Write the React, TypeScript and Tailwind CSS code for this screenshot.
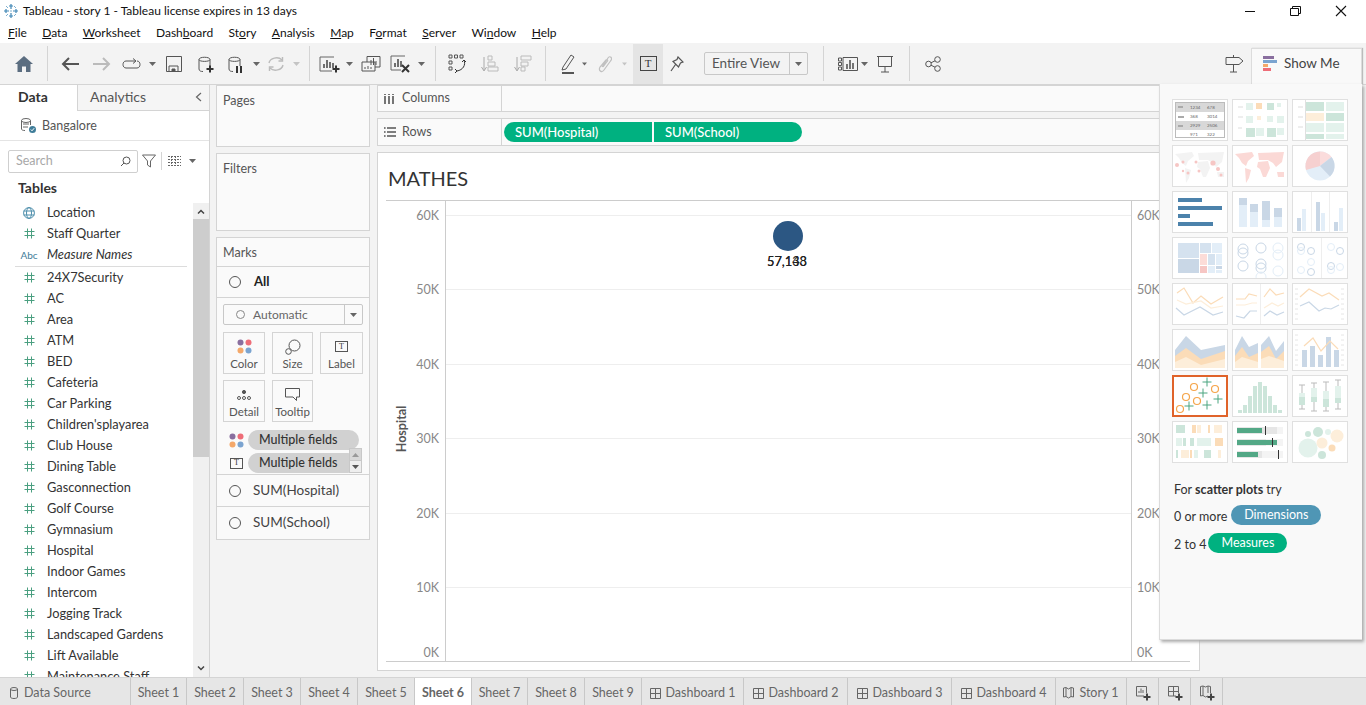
import React from 'react';

const fields = ['24X7Security', 'AC', 'Area', 'ATM', 'BED', 'Cafeteria', 'Car Parking', "Children'splayarea", 'Club House', 'Dining Table', 'Gasconnection', 'Golf Course', 'Gymnasium', 'Hospital', 'Indoor Games', 'Intercom', 'Jogging Track', 'Landscaped Gardens', 'Lift Available', 'Maintenance Staff'];
const menus = [['F', 'ile'], ['D', 'ata'], ['W', 'orksheet'], ['Dash', 'b', 'oard'], ['St', 'o', 'ry'], ['A', 'nalysis'], ['M', 'ap'], ['F', 'o', 'rmat'], ['S', 'erver'], ['Wi', 'n', 'dow'], ['H', 'elp']];
const ticks = ['60K', '50K', '40K', '30K', '20K', '10K', '0K'];

const BLUE1 = '#c9d7e6';
const BLUE2 = '#e3eef8';
const ORANGE1 = '#fbdcb8';
const ORANGE2 = '#fdeeda';
const GREEN1 = '#cce5da';
const GREEN2 = '#e3f2ec';

function Caret({ light }: { light?: boolean }) {
    return (
        <svg width="7" height="4" viewBox="0 0 7 4">
            <path d="M0 0H7L3.5 4Z" fill={light ? '#c4c4c4' : '#666'} />
        </svg>
    );
}

function Ico({ children, w = 24, h = 24 }: { children: React.ReactNode; w?: number; h?: number }) {
    return (
        <svg width={w} height={h} viewBox={`0 0 ${w} ${h}`} fill="none" stroke="#555" strokeWidth="1">
            {children}
        </svg>
    );
}

function Plus({ x, y, c = '#333' }: { x: number; y: number; c?: string }) {
    return <path d={`M${x - 3.5} ${y}H${x + 3.5}M${x} ${y - 3.5}V${y + 3.5}`} stroke={c} strokeWidth="2" />;
}

function Cylinder() {
    return <path d="M4 6.5C4 3.5 15 3.5 15 6.5V13M4 6.5C4 9 15 9 15 6.5M4 6.5V16C4 18 6 18.5 8 18.5" />;
}

function Toolbar() {
    const box = 'flex h-[40px] items-center justify-center shrink-0';
    const sep = 'h-[35px] w-px bg-[#d4d4d4] shrink-0';
    return (
        <div className="flex h-[42px] items-center border-b border-[#d4d4d4] bg-[#f3f3f3]">
            <div className={`${box} w-[47px]`}>
                <svg width="18" height="16" viewBox="0 0 18 16"><path d="M9 0L18 8H15.5V16H11V10.5H7V16H2.5V8H0Z" fill="#5b6d80" /></svg>
            </div>
            <div className={sep} />
            <div className={`${box} ml-[6px] w-[32px]`}>
                <svg width="18" height="14" viewBox="0 0 18 14" fill="none" stroke="#555" strokeWidth="2"><path d="M18 7H2M8 1L2 7L8 13" /></svg>
            </div>
            <div className={`${box} w-[32px]`}>
                <svg width="18" height="14" viewBox="0 0 18 14" fill="none" stroke="#bbb" strokeWidth="2"><path d="M0 7H16M10 1L16 7L10 13" /></svg>
            </div>
            <div className={`${box} w-[28px]`}>
                <svg width="20" height="12" viewBox="0 0 20 12" fill="none" stroke="#555"><path d="M13 3H4C0 3 0 10 4 10H15C19 10 19 3 15 3" /><path d="M11 0.5L14 3L11 5.5" /></svg>
            </div>
            <div className={`${box} w-[12px]`}><Caret /></div>
            <div className={`${box} w-[32px]`}>
                <Ico w={16} h={16}><path d="M0.5 0.5H15.5V15.5H0.5Z" /><path d="M3 15V10H12V15" /><path d="M6 13H9V15H6Z" fill="#555" /></Ico>
            </div>
            <div className={`${box} w-[30px]`}><Ico w={20} h={22}><Cylinder /><Plus x={15} y={16} /></Ico></div>
            <div className={`${box} w-[30px]`}><Ico w={20} h={22}><Cylinder /><path d="M12 13V20M16 13V20" stroke="#333" strokeWidth="2" /></Ico></div>
            <div className={`${box} w-[12px]`}><Caret /></div>
            <div className={`${box} w-[28px]`}>
                <svg width="18" height="16" viewBox="0 0 18 16" fill="none" stroke="#bbb" strokeWidth="1.4"><path d="M2 7C3 2 11 0 15 4M16 9C15 14 7 16 3 12" /><path d="M15.5 1V5H11.5M2.5 15V11H6.5" /></svg>
            </div>
            <div className={`${box} w-[12px]`}><Caret light /></div>
            <div className="w-[7px]" />
            <div className={sep} />
            <div className={`${box} ml-[8px] w-[24px]`}>
                <Ico w={24} h={20}><path d="M16 3H2V17H14" stroke="#666" /><path d="M6 14V10M9 14V6M12 14V8M15 14V9" stroke="#444" strokeWidth="1.5" /><Plus x={18} y={15} /></Ico>
            </div>
            <div className={`${box} w-[15px]`}><Caret /></div>
            <div className={`${box} w-[28px]`}>
                <Ico w={20} h={18}><path d="M6 1.5H19V12H6Z" fill="#f3f3f3" /><path d="M1 7H14V16H1Z" fill="#f3f3f3" /><path d="M10 10V5M12.5 10V3M15 10V6M4 14V12M7 14V11M10 14V12" /></Ico>
            </div>
            <div className={`${box} w-[31px]`}>
                <Ico w={24} h={20}><path d="M16 2H2V16H12" stroke="#666" /><path d="M6 13V9M9 13V5M12 13V7" stroke="#444" strokeWidth="1.5" /><path d="M13 11L20 18M20 11L13 18" stroke="#333" strokeWidth="2" /></Ico>
            </div>
            <div className={`${box} w-[11px]`}><Caret /></div>
            <div className="w-[8px]" />
            <div className={sep} />
            <div className={`${box} ml-[6px] w-[32px]`}>
                <Ico w={20} h={20}><path d="M1 1H4V4H1ZM6.5 1H9.5V4H6.5ZM12 1H15V4H12ZM1 7H4V10H1ZM1 13H4V16H1Z" /><path d="M16 6C18 11 15 16 9 17M7 15L9 17L7 19M14 8L16 6L18 8" stroke="#333" /></Ico>
            </div>
            <div className={`${box} w-[32px]`}>
                <Ico w={20} h={18}><path d="M4 2V15M1.5 12L4 16L6.5 12" stroke="#aaa" /><path d="M8 1H12V5H8ZM8 7H15V11H8ZM8 12H18V16H8Z" stroke="#bbb" /></Ico>
            </div>
            <div className={`${box} w-[33px]`}>
                <Ico w={20} h={18}><path d="M4 2V15M1.5 12L4 16L6.5 12" stroke="#aaa" /><path d="M8 1H18V5H8ZM8 7H15V11H8ZM8 12H12V16H8Z" stroke="#bbb" /></Ico>
            </div>
            <div className="w-[6px]" />
            <div className={sep} />
            <div className={`${box} ml-[8px] w-[28px]`}>
                <Ico w={16} h={20}><path d="M3 13L11 1L14 3L6 15L2 16Z" stroke="#555" /><path d="M2 19H14" stroke="#555" strokeWidth="2" /></Ico>
            </div>
            <div className={`${box} w-[5px]`}><Caret /></div>
            <div className={`${box} ml-[4px] w-[28px]`}>
                <svg width="14" height="18" viewBox="0 0 14 18" fill="none" stroke="#c0c0c0" strokeWidth="1.2"><path d="M4 12L10 3C12 0 15 3 12.5 6L6 15C4 18 0 16 2 12L8 5C9 4 10 5 9.5 6L5 12" /></svg>
            </div>
            <div className={`${box} ml-[3px] w-[5px]`}><Caret light /></div>
            <div className={`${box} ml-[6px] w-[30px] bg-[#e4e4e4]`}>
                <div className="flex h-[15px] w-[17px] items-center justify-center border border-[#444] text-[11px] leading-none text-[#333] [font-family:'Liberation_Serif',serif]">T</div>
            </div>
            <div className={`${box} w-[28px]`}>
                <Ico w={14} h={16}><path d="M8 1L13 6L10.5 7L8.5 11L3 5.5L7 3.5ZM5.5 8.5L1 15" stroke="#555" strokeWidth="1.2" /></Ico>
            </div>
            <div className="ml-[13px] flex h-[23px] w-[104px] items-center rounded-[2px] border border-[#c8c8c8]">
                <span className="flex-1 pl-[7px] text-[13.5px] text-[#555]">Entire View</span>
                <span className="flex h-full w-[18px] items-center justify-center border-l border-[#c8c8c8]"><Caret /></span>
            </div>
            <div className="w-[15px]" />
            <div className={sep} />
            <div className={`${box} ml-[11px] w-[26px]`}>
                <Ico w={20} h={14}><path d="M0.5 1H3.5V4H0.5ZM0.5 5.5H3.5V8.5H0.5ZM0.5 10H3.5V13H0.5Z" /><path d="M5 0.5H19.5V13.5H5Z" stroke="#555" /><path d="M9 12V7M12 12V3M15 12V6" strokeWidth="1.6" /></Ico>
            </div>
            <div className={`${box} w-[7px]`}><Caret /></div>
            <div className={`${box} ml-[2px] w-[30px]`}>
                <Ico w={18} h={18}><path d="M1 1.5H17M2.5 1.5V11.5H15.5V1.5M9 11.5V17M5 17H13" /></Ico>
            </div>
            <div className="w-[9px]" />
            <div className={sep} />
            <div className={`${box} ml-[8px] w-[30px]`}>
                <Ico w={16} h={16}><circle cx="3.5" cy="8" r="2.8" /><circle cx="12.5" cy="3.5" r="2.8" /><circle cx="12.5" cy="12.5" r="2.8" /><path d="M6 6.8L10 4.8M6 9.2L10 11.2" /></Ico>
            </div>
            <div className="flex-1" />
            <div className={`${box} mr-[122px] w-[20px]`}>
                <Ico w={19} h={18}><path d="M1 2.5H14L18 6L14 9.5H1ZM8.5 0V2.5M8.5 9.5V17M5 17H12" /></Ico>
            </div>
        </div>
    );
}

function Field({ name, italic, kind }: { name: string; italic?: boolean; kind: 'hash' | 'globe' | 'abc' }) {
    return (
        <div className="flex h-[21px] items-center">
            <div className="flex w-[47px] justify-center pl-[11px]">
                {kind === 'hash' && (
                    <svg width="11" height="11" viewBox="0 0 11 11" fill="none" stroke="#4a9f80"><path d="M3.5 0.5V10.5M7.5 0.5V10.5M0.5 3.5H10.5M0.5 7.5H10.5" /></svg>
                )}
                {kind === 'globe' && (
                    <svg width="12" height="12" viewBox="0 0 12 12" fill="none" stroke="#4f8fac"><circle cx="6" cy="6" r="5.4" /><ellipse cx="6" cy="6" rx="2.5" ry="5.4" /><path d="M0.6 4H11.4M0.6 8H11.4" /></svg>
                )}
                {kind === 'abc' && <span className="text-[10px] leading-none text-[#3f7d99]">Abc</span>}
            </div>
            <span className={`text-[12.8px] text-[#333] ${italic ? 'italic' : ''}`}>{name}</span>
        </div>
    );
}

function Sidebar() {
    return (
        <div className="flex h-full w-[210px] shrink-0 flex-col overflow-hidden border-r border-[#d4d4d4] bg-white">
            <div className="flex h-[26px] shrink-0">
                <div className="flex w-[77px] items-center pb-[3px] pl-[18px] text-[14px] font-bold text-[#333]">Data</div>
                <div className="flex flex-1 items-center justify-between border-b border-l border-[#d4d4d4] bg-[#f5f5f5] pb-[2px] pl-[12px] pr-[7px] text-[14px] text-[#555]">
                    <span>Analytics</span>
                    <svg width="7" height="10" viewBox="0 0 7 10" fill="none" stroke="#666" strokeWidth="1.2"><path d="M6 1L1.5 5L6 9" /></svg>
                </div>
            </div>
            <div className="flex h-[30px] shrink-0 items-center gap-[5px] border-b border-[#e4e4e4] pl-[20px] text-[12.5px] text-[#555]">
                <svg width="17" height="17" viewBox="0 0 17 17" fill="none" stroke="#666"><ellipse cx="6" cy="3.5" rx="4.5" ry="2" /><path d="M1.5 3.5V12C1.5 13 3 13.5 5 13.5M10.5 3.5V8M3 7H9M3 10H8" /><circle cx="12.5" cy="12.5" r="3.5" fill="#3f7d99" stroke="none" /><path d="M10.8 12.5L12 13.8L14.2 11.2" stroke="#fff" /></svg>
                <span className="pt-[1px]">Bangalore</span>
            </div>
            <div className="flex h-[38px] shrink-0 items-center pl-[8px] pt-[2px]">
                <div className="flex h-[23px] w-[130px] items-center justify-between rounded-[2px] border border-[#cfcfcf] pl-[7px] pr-[6px] text-[12.5px] text-[#a8a8a8]">
                    <span>Search</span>
                    <svg width="11" height="11" viewBox="0 0 11 11" fill="none" stroke="#555"><circle cx="6.5" cy="4.5" r="3.5" /><path d="M4 7L1 10" /></svg>
                </div>
                <svg className="ml-[4px]" width="14" height="14" viewBox="0 0 14 14" fill="none" stroke="#666"><path d="M0.5 1H13.5L8.5 7V13L5.5 11V7Z" /></svg>
                <div className="ml-[5px] h-[18px] w-px bg-[#d4d4d4]" />
                <svg className="ml-[6px]" width="13" height="10" viewBox="0 0 13 10" fill="none" stroke="#666"><path d="M0 0.5H13M0 3.5H13M0 6.5H13M0 9.5H13M3.5 0V10M7.5 0V10" strokeDasharray="2 1" /></svg>
                <div className="ml-[8px]"><Caret /></div>
            </div>
            <div className="flex flex-1 overflow-hidden">
                <div className="min-w-0 flex-1">
                    <div className="flex h-[16px] items-center pl-[18px] text-[14px] font-bold text-[#333]">Tables</div>
                    <div className="mt-[7px]">
                        <Field name="Location" kind="globe" />
                        <Field name="Staff Quarter" kind="hash" />
                        <Field name="Measure Names" italic kind="abc" />
                        <div className="ml-[15px] mr-[6px] mt-[1px] h-px bg-[#dcdcdc]" />
                        {fields.map(name => <Field key={name} name={name} kind="hash" />)}
                    </div>
                </div>
                <div className="mt-[24px] flex w-[16px] shrink-0 flex-col bg-[#f0f0f0]">
                    <div className="flex h-[16px] items-center justify-center">
                        <svg width="8" height="5" viewBox="0 0 8 5" fill="none" stroke="#444" strokeWidth="1.5"><path d="M1 4.5L4 1.5L7 4.5" /></svg>
                    </div>
                    <div className="h-[238px] bg-[#cdcdcd]" />
                    <div className="flex-1" />
                    <div className="flex h-[17px] items-center justify-center">
                        <svg width="8" height="5" viewBox="0 0 8 5" fill="none" stroke="#444" strokeWidth="1.5"><path d="M1 0.5L4 3.5L7 0.5" /></svg>
                    </div>
                </div>
            </div>
        </div>
    );
}

function MarkBtn({ label, children }: { label: string; children: React.ReactNode }) {
    return (
        <div className="flex h-[42px] flex-col items-center justify-between border border-[#d4d4d4] pb-[2px] pt-[5px] text-[11.5px] leading-[14px] text-[#555]">
            <div className="flex h-[17px] items-center">{children}</div>
            <span>{label}</span>
        </div>
    );
}

function Dots() {
    return (
        <svg width="15" height="15" viewBox="0 0 15 15">
            <circle cx="3.5" cy="3.5" r="3" fill="#8a6f9f" /><circle cx="11.5" cy="3.5" r="3" fill="#ee6d78" />
            <circle cx="3.5" cy="11.5" r="3" fill="#f4a86a" /><circle cx="11.5" cy="11.5" r="3" fill="#7ba4d0" />
        </svg>
    );
}

function TBox() {
    return <div className="flex h-[11px] w-[13px] items-center justify-center border border-[#555] text-[8px] leading-none text-[#333] [font-family:'Liberation_Serif',serif]">T</div>;
}

function Radio() {
    return <div className="h-[12px] w-[12px] rounded-full border border-[#555]" />;
}

function MiddleColumn() {
    const card = 'border border-[#d4d4d4] bg-[#fafafa]';
    return (
        <div className="ml-[6px] flex w-[154px] shrink-0 flex-col">
            <div className={`${card} h-[62px] pl-[6px] pt-[7px] text-[12.5px] leading-[15px] text-[#555]`}>Pages</div>
            <div className={`${card} mt-[6px] h-[78px] pl-[6px] pt-[7px] text-[12.5px] leading-[15px] text-[#555]`}>Filters</div>
            <div className={`${card} mt-[6px] h-[303px]`}>
                <div className="flex h-[29px] items-center border-b border-[#d4d4d4] pl-[6px] pt-[2px] text-[12.5px] text-[#555]">Marks</div>
                <div className="flex h-[31px] items-center gap-[13px] border-b border-[#d4d4d4] pl-[12px] text-[13px] font-bold text-[#222]"><Radio />All</div>
                <div className="px-[6px] pt-[6px]">
                    <div className="flex h-[21px] items-center rounded-[2px] border border-[#c8c8c8]">
                        <div className="flex flex-1 items-center gap-[8px] pl-[12px] text-[12px] text-[#666]">
                            <div className="h-[9px] w-[9px] rounded-full border border-[#888]" />Automatic
                        </div>
                        <div className="flex h-full w-[18px] items-center justify-center border-l border-[#c8c8c8]"><Caret /></div>
                    </div>
                    <div className="mt-[7px] grid grid-cols-[42px_41px_43px] gap-x-[7px] gap-y-[6px]">
                        <MarkBtn label="Color"><Dots /></MarkBtn>
                        <MarkBtn label="Size">
                            <svg width="16" height="16" viewBox="0 0 16 16" fill="none" stroke="#555"><circle cx="9.5" cy="6.5" r="5.5" /><circle cx="3.5" cy="12.5" r="2.8" fill="#fafafa" /></svg>
                        </MarkBtn>
                        <MarkBtn label="Label"><TBox /></MarkBtn>
                        <MarkBtn label="Detail">
                            <svg width="14" height="10" viewBox="0 0 14 10" fill="none" stroke="#555"><circle cx="7" cy="2" r="1.6" fill="#555" /><circle cx="2" cy="8" r="1.5" /><circle cx="7" cy="8" r="1.5" /><circle cx="12" cy="8" r="1.5" /></svg>
                        </MarkBtn>
                        <MarkBtn label="Tooltip">
                            <svg width="15" height="13" viewBox="0 0 15 13" fill="none" stroke="#555"><path d="M0.5 0.5H14.5V9H11.5V12.5L8 9H0.5Z" /></svg>
                        </MarkBtn>
                    </div>
                </div>
                <div className="relative mt-[8px] h-[44px]">
                    <div className="flex h-[20px] items-center pl-[12px]">
                        <div className="w-[19px]"><Dots /></div>
                        <div className="flex h-[20px] w-[111px] items-center rounded-full bg-[#d1d1d1] pl-[11px] text-[12.5px] font-medium text-[#333]">Multiple fields</div>
                    </div>
                    <div className="mt-[3px] flex h-[20px] items-center pl-[13px]">
                        <div className="w-[18px]"><TBox /></div>
                        <div className="flex h-[20px] w-[110px] items-center rounded-full bg-[#d1d1d1] pl-[11px] text-[12.5px] font-medium text-[#333]">Multiple fields</div>
                    </div>
                    <div className="absolute left-[132px] top-[18px] flex h-[25px] w-[13px] flex-col border border-[#c8c8c8]">
                        <div className="flex flex-1 items-center justify-center bg-[#d8d8d8]"><svg width="7" height="4" viewBox="0 0 7 4"><path d="M0 4H7L3.5 0Z" fill="#999" /></svg></div>
                        <div className="flex flex-1 items-center justify-center border-t border-[#c8c8c8] bg-[#eee]"><svg width="7" height="4" viewBox="0 0 7 4"><path d="M0 0H7L3.5 4Z" fill="#555" /></svg></div>
                    </div>
                </div>
                <div className="flex h-[32px] items-center gap-[12px] border-t border-[#d4d4d4] pl-[12px] text-[13.5px] text-[#444]"><Radio />SUM(Hospital)</div>
                <div className="flex h-[32px] items-center gap-[12px] border-t border-[#d4d4d4] pl-[12px] text-[13.5px] text-[#444]"><Radio />SUM(School)</div>
            </div>
        </div>
    );
}

function Chart() {
    const H = 462;
    return (
        <div className="ml-[8px] mt-[15px] h-[462px] w-[804px]">
            <svg width="804" height={H} viewBox={`0 0 804 ${H}`} className="block">
                <path d="M0 0.5H804M0 461.5H804" stroke="#ccc" />
                <path d="M59.5 .5V461M745.5 .5V461" stroke="#ccc" />
                {ticks.map((t, i) => {
                    const y = 15 + i * 74.4;
                    const ly = i === 6 ? 457 : y + 5;
                    return (
                        <g key={t} fontSize="12.5" fill="#888" fontFamily="Lato">
                            {i < 6 && <path d={`M60 ${Math.round(y) + 0.5}H745`} stroke="#eeeeee" />}
                            <text x="53" y={ly} textAnchor="end">{t}</text>
                            <text x="751" y={ly}>{t}</text>
                        </g>
                    );
                })}
                <text transform="translate(20 229) rotate(-90)" textAnchor="middle" fontSize="12.5" fontWeight="700" fill="#555" fontFamily="Lato">Hospital</text>
                <circle cx="402" cy="36" r="15" fill="#2c5783" />
                <g fontSize="12.8" fill="#222" textAnchor="middle" fontFamily="Lato">
                    <text x="401" y="66">57,148</text>
                    <text x="401" y="66">57,133</text>
                </g>
            </svg>
        </div>
    );
}

function Thumb({ children, active }: { children?: React.ReactNode; active?: boolean }) {
    return (
        <div className={`h-[42px] w-[56px] bg-white ${active ? 'border-2 border-[#e0632a]' : 'border border-[#e0e0e0]'}`}>
            <svg width={active ? 52 : 54} height={active ? 38 : 40} viewBox={active ? '2 2 52 38' : '1 1 54 40'} className="block">{children}</svg>
        </div>
    );
}

function R({ x, y, w, h, c }: { x: number; y: number; w: number; h: number; c: string }) {
    return <rect x={x} y={y} width={w} height={h} fill={c} />;
}

const LAND = 'M3 9L20 7L22 11L16 16L14 21L10 18L7 13ZM13 23L19 25L17 33L14 38ZM26 17L36 16L38 23L34 32L31 32L28 24L25 22ZM26 8L52 7L50 17L44 22L41 18L36 15L27 15ZM45 27L52 27L52 32L46 32Z';

function Ticks() {
    return (
        <g stroke="#e6e6e6">
            {[6, 11, 16, 21, 26, 31, 36].map(y => <path key={y} d={`M3 ${y}H6M49 ${y}H52`} />)}
        </g>
    );
}

function ShowMe() {
    return (
        <div className="absolute left-[1159px] top-[48px] flex w-[203px] flex-col">
            <div className="flex justify-end">
                <div className="flex h-[36px] w-[111px] items-center gap-[6px] border-l border-t border-r border-[#dcdcdc] bg-[#f9f9f9] pb-[6px] pl-[11px] text-[13.5px] text-[#444] shadow-[1px_0_1px_#bbb]">
                    <svg width="15" height="16" viewBox="0 0 15 16"><rect width="11" height="3" y="0" fill="#8a6f9f" /><rect width="14" height="3" y="4" fill="#7ba4d0" /><rect width="5" height="3" y="8" fill="#f4a86a" /><rect width="8" height="3" y="12" fill="#ee6d78" /></svg>
                    Show Me
                </div>
            </div>
            <div className="h-[556px] border-b border-l border-[#dcdcdc] bg-[#f9f9f9] pl-[12px] pt-[15px] shadow-[2px_2px_3px_#aaa]">
                <div className="grid grid-cols-[56px_56px_56px] gap-[4px]">
                    <Thumb>
                        <rect x="3.5" y="3.5" width="49" height="35" fill="none" stroke="#bbb" />
                        <R x={4} y={4} w={48} h={9} c="#d8d8d8" /><R x={4} y={22} w={48} h={9} c="#d8d8d8" />
                        <R x={6} y={7} w={5} h={2} c="#aaa" /><R x={6} y={17} w={6} h={2} c="#aaa" /><R x={6} y={26} w={5} h={2} c="#aaa" />
                        <g fontSize="4.5" fill="#666" fontFamily="Lato">
                            <text x="18" y="10">1234</text><text x="35" y="10">678</text>
                            <text x="18" y="19">368</text><text x="35" y="19">3014</text>
                            <text x="18" y="28">2929</text><text x="35" y="28">2506</text>
                            <text x="18" y="37">971</text><text x="35" y="37">322</text>
                        </g>
                    </Thumb>
                    <Thumb>
                        <R x={6} y={7} w={5} h={2} c="#eee" /><R x={6} y={17} w={5} h={2} c="#eee" /><R x={6} y={28} w={4} h={2} c="#eee" />
                        <R x={14} y={4} w={7} h={7} c={GREEN2} /><R x={24} y={4} w={6} h={6} c={ORANGE1} /><R x={35} y={4} w={7} h={7} c={GREEN1} /><R x={45} y={4} w={4} h={4} c={GREEN2} />
                        <R x={14} y={17} w={7} h={7} c={GREEN2} /><R x={25} y={17} w={4} h={4} c={ORANGE2} /><R x={35} y={17} w={6} h={6} c={GREEN2} /><R x={45} y={17} w={7} h={7} c={GREEN2} />
                        <R x={14} y={29} w={9} h={9} c={GREEN1} /><R x={24} y={29} w={8} h={8} c={GREEN2} /><R x={35} y={29} w={9} h={9} c={GREEN1} /><R x={45} y={29} w={7} h={7} c={GREEN2} />
                    </Thumb>
                    <Thumb>
                        <path d="M13.5 1V41" stroke="#e0e0e0" />
                        <R x={6} y={7} w={5} h={2} c="#eee" /><R x={6} y={17} w={5} h={2} c="#eee" /><R x={6} y={27} w={5} h={2} c="#eee" />
                        <R x={14} y={3} w={18} h={9} c={GREEN1} /><R x={34} y={3} w={18} h={9} c={GREEN2} />
                        <R x={14} y={14} w={18} h={8} c={ORANGE2} /><R x={34} y={14} w={18} h={8} c={GREEN1} />
                        <R x={14} y={24} w={18} h={9} c={GREEN2} /><R x={34} y={24} w={18} h={9} c={GREEN2} />
                        <R x={14} y={35} w={18} h={5} c={GREEN1} /><R x={34} y={35} w={18} h={5} c={GREEN2} />
                    </Thumb>
                    <Thumb>
                        <path d={LAND} fill="#f3f3f3" />
                        {[[5, 20, 2], [11, 17, 1.5], [24, 17, 1.5], [41, 18, 2.6], [27, 26, 1.5], [46, 24, 2], [49, 30, 1.5], [16, 28, 1.5], [11, 26, 1.2]].map(([x, y, r]) => <circle key={`${x}-${y}`} cx={x} cy={y} r={r} fill="#f6c6c4" />)}
                    </Thumb>
                    <Thumb><path d={LAND} fill="#fbd9d6" /></Thumb>
                    <Thumb>
                        <circle cx="28" cy="21" r="14.5" fill={BLUE2} />
                        <path d="M28 21V6.5A14.5 14.5 0 0 1 39.5 12Z" fill="#fbdcdc" />
                        <path d="M28 21L39.5 12A14.5 14.5 0 0 1 38 31.5Z" fill={BLUE1} />
                        <path d="M28 21V6.5A14.5 14.5 0 0 0 14 25Z" fill="#f6d0d0" />
                    </Thumb>
                    <Thumb>
                        <R x={6} y={7} w={24} h={4} c="#4c82ab" /><R x={6} y={15} w={44} h={4} c="#4c82ab" /><R x={6} y={23} w={12} h={4} c="#4c82ab" /><R x={6} y={31} w={35} h={4} c="#4c82ab" />
                    </Thumb>
                    <Thumb>
                        <R x={7} y={7} w={8} h={7} c={BLUE1} /><R x={7} y={14} w={8} h={22} c={BLUE2} />
                        <R x={18} y={13} w={8} h={8} c={BLUE1} /><R x={18} y={21} w={8} h={15} c={BLUE2} />
                        <R x={30} y={10} w={8} h={19} c={BLUE1} /><R x={30} y={29} w={8} h={7} c={BLUE2} />
                        <R x={42} y={17} w={8} h={9} c={BLUE1} /><R x={42} y={26} w={8} h={10} c={BLUE2} />
                    </Thumb>
                    <Thumb>
                        <path d="M19.5 1V41M37.5 1V41" stroke="#eeeeee" />
                        <R x={5} y={27} w={4} h={13} c={BLUE1} /><R x={10} y={18} w={4} h={22} c={BLUE2} />
                        <R x={24} y={11} w={4} h={29} c={BLUE1} /><R x={29} y={22} w={4} h={18} c={BLUE2} />
                        <R x={42} y={31} w={4} h={9} c={BLUE1} /><R x={47} y={17} w={4} h={23} c={BLUE2} />
                    </Thumb>
                    <Thumb>
                        <R x={6} y={6} w={21} h={15} c="#d5e2ef" /><R x={6} y={22} w={21} h={14} c={BLUE1} />
                        <R x={28} y={6} w={11} h={10} c="#d5e2ef" /><R x={40} y={6} w={10} h={10} c={BLUE2} />
                        <R x={28} y={17} w={7} h={11} c="#fcdcd8" /><R x={28} y={29} w={7} h={7} c="#f6c6c4" />
                        <R x={36} y={17} w={7} h={11} c="#d5e2ef" /><R x={44} y={17} w={6} h={11} c={BLUE2} />
                        <R x={36} y={29} w={7} h={7} c={BLUE2} /><R x={44} y={29} w={6} h={3} c={BLUE1} /><R x={44} y={33} w={6} h={3} c={BLUE2} />
                    </Thumb>
                    <Thumb>
                        <g fill="none" stroke={BLUE1} strokeWidth="1">
                            <circle cx="11" cy="12" r="5" /><circle cx="11" cy="16" r="5" /><circle cx="29" cy="11" r="5" /><circle cx="11" cy="29" r="5" /><circle cx="29" cy="27" r="5" /><circle cx="29" cy="31" r="5" />
                        </g>
                        <g fill="none" stroke={BLUE2} strokeWidth="1">
                            <circle cx="46" cy="11" r="5" /><circle cx="46" cy="18" r="5" /><circle cx="46" cy="34" r="5" /><circle cx="29" cy="40" r="5" />
                        </g>
                    </Thumb>
                    <Thumb>
                        <path d="M29.5 1V41" stroke="#eeeeee" />
                        <g fill="none" stroke={BLUE1}>
                            <circle cx="9" cy="10" r="3.5" /><circle cx="19" cy="14" r="3.5" /><circle cx="19" cy="35" r="3.5" /><circle cx="39" cy="29" r="3.5" /><circle cx="48" cy="14" r="3.5" />
                        </g>
                        <g fill="none" stroke={BLUE2}>
                            <circle cx="9" cy="14" r="3.5" /><circle cx="19" cy="25" r="3.5" /><circle cx="9" cy="33" r="3.5" /><circle cx="39" cy="10" r="3.5" /><circle cx="48" cy="30" r="3.5" /><circle cx="39" cy="33" r="3.5" />
                        </g>
                    </Thumb>
                    <Thumb>
                        <g fill="none" strokeWidth="1.2">
                            <path d="M5 10L12 5L21 20L29 13L39 21L51 14" stroke={ORANGE1} />
                            <path d="M5 17L14 21L29 18L39 25L51 23" stroke={ORANGE2} />
                            <path d="M4 25L12 32L28 24L41 32L51 29" stroke={BLUE1} />
                        </g>
                    </Thumb>
                    <Thumb>
                        <path d="M28.5 1V41" stroke="#eeeeee" />
                        <g fill="none" strokeWidth="1.2">
                            <path d="M4 16L13 16L17 11L25 13" stroke={ORANGE1} /><path d="M4 22L13 22L20 20L25 20" stroke={ORANGE2} /><path d="M4 33L12 35L18 28L25 28" stroke={BLUE1} />
                            <path d="M32 14L38 6L44 12L52 10" stroke={ORANGE1} /><path d="M32 25L40 20L46 23L52 20" stroke={ORANGE2} /><path d="M32 33L38 28L45 32L52 29" stroke={BLUE1} />
                        </g>
                    </Thumb>
                    <Thumb>
                        <Ticks />
                        <g fill="none" strokeWidth="1.2">
                            <path d="M8 14L17 6L30 13L37 10L47 17" stroke={ORANGE1} /><path d="M8 23L17 19L27 28L33 25L39 26L47 22" stroke={BLUE1} />
                        </g>
                    </Thumb>
                    <Thumb>
                        <path d="M3 21L14 7L29 21L53 16V39H3Z" fill={BLUE1} />
                        <path d="M3 27L14 19L29 30L53 22V39H3Z" fill={ORANGE1} />
                        <path d="M3 33L14 28L29 36L53 30V39H3Z" fill={ORANGE2} />
                    </Thumb>
                    <Thumb>
                        <path d="M3 21L10 7L17 18L26 14V39H3Z" fill={BLUE1} /><path d="M3 27L10 18L17 28L26 24V39H3Z" fill={ORANGE1} /><path d="M3 33L10 28L26 33V39H3Z" fill={ORANGE2} />
                        <path d="M29 16L37 7L44 22L52 12V39H29Z" fill={BLUE1} /><path d="M29 23L37 17L44 30L52 22V39H29Z" fill={ORANGE1} /><path d="M29 30L37 27L52 32V39H29Z" fill={ORANGE2} />
                    </Thumb>
                    <Thumb>
                        <Ticks />
                        <R x={10} y={21} w={5} h={17} c={BLUE1} /><R x={18} y={17} w={5} h={21} c={BLUE1} /><R x={26} y={26} w={5} h={12} c={BLUE1} /><R x={34} y={8} w={5} h={30} c={BLUE1} /><R x={42} y={21} w={5} h={17} c={BLUE1} />
                        <path d="M12 17L21 9L29 22L38 12L46 20" fill="none" stroke={ORANGE1} strokeWidth="1.2" />
                    </Thumb>
                    <Thumb active>
                        <g fill="none" stroke="#f5a54a" strokeWidth="1.2">
                            <circle cx="22" cy="12" r="3.5" /><circle cx="43" cy="14" r="3.5" /><circle cx="14" cy="22" r="3.5" /><circle cx="25" cy="26" r="3.5" /><circle cx="8" cy="34" r="3.5" />
                        </g>
                        <g fill="none" stroke="#4ba580" strokeWidth="1">
                            {[[35, 7], [31, 18], [46, 24], [17, 31], [35, 30]].map(([x, y]) => <path key={`${x}-${y}`} d={`M${x - 4.5} ${y}H${x + 4.5}M${x} ${y - 4.5}V${y + 4.5}`} />)}
                        </g>
                    </Thumb>
                    <Thumb>
                        {[3, 8, 17, 27, 31, 27, 17, 8, 3].map((h, i) => <R key={i} x={6 + i * 5} y={38 - h} w={4} h={h} c={GREEN1} />)}
                    </Thumb>
                    <Thumb>
                        <path d="M7 10H13M10 10V34M7 34H13M19 8H25M22 8V36M19 36H25M31 7H37M34 7V36M31 36H37M43 5H49M46 5V34M43 34H49" stroke="#bbb" fill="none" />
                        <R x={7} y={18} w={6} h={8} c={GREEN2} /><R x={7} y={22} w={6} h={8} c={GREEN1} />
                        <R x={19} y={13} w={6} h={9} c={GREEN2} /><R x={19} y={22} w={6} h={5} c={GREEN1} />
                        <R x={31} y={16} w={6} h={8} c={GREEN2} /><R x={31} y={24} w={6} h={8} c={GREEN1} />
                        <R x={43} y={11} w={6} h={12} c={GREEN2} /><R x={43} y={23} w={6} h={5} c={GREEN1} />
                    </Thumb>
                    <Thumb>
                        <R x={4} y={4} w={9} h={8} c={GREEN1} /><R x={20} y={4} w={4} h={8} c={ORANGE1} /><R x={25} y={4} w={4} h={8} c={ORANGE2} /><R x={36} y={4} w={2} h={8} c={ORANGE1} /><R x={42} y={4} w={8} h={8} c={ORANGE2} />
                        <R x={4} y={17} w={6} h={8} c={GREEN2} /><R x={11} y={17} w={3} h={8} c={GREEN1} /><R x={18} y={17} w={4} h={8} c={GREEN1} /><R x={25} y={17} w={14} h={8} c={GREEN2} /><R x={43} y={17} w={8} h={8} c={ORANGE1} />
                        <R x={4} y={29} w={2} h={8} c={GREEN1} /><R x={9} y={29} w={8} h={8} c={ORANGE2} /><R x={18} y={29} w={2} h={8} c={ORANGE1} /><R x={22} y={29} w={4} h={8} c={GREEN2} /><R x={32} y={29} w={7} h={8} c={GREEN1} /><R x={46} y={29} w={3} h={8} c={ORANGE2} />
                    </Thumb>
                    <Thumb>
                        <R x={5} y={6} w={46} h={7} c="#f4f4f4" /><R x={5} y={6} w={40} h={7} c="#e6e6e6" /><R x={5} y={7} w={25} h={5} c="#53a886" /><R x={33} y={5} w={1} h={9} c="#333" />
                        <R x={5} y={18} w={46} h={7} c="#f4f4f4" /><R x={5} y={18} w={29} h={7} c="#e6e6e6" /><R x={5} y={19} w={40} h={5} c="#53a886" /><R x={40} y={17} w={1} h={9} c="#333" />
                        <R x={5} y={30} w={46} h={7} c="#f4f4f4" /><R x={5} y={30} w={25} h={7} c="#e6e6e6" /><R x={5} y={31} w={21} h={5} c="#53a886" /><R x={46} y={29} w={1} h={9} c="#333" />
                    </Thumb>
                    <Thumb>
                        <circle cx="16" cy="27" r="9.5" fill={GREEN2} /><circle cx="16" cy="13" r="3" fill={GREEN1} /><circle cx="26" cy="11" r="5" fill={GREEN1} /><circle cx="36" cy="11" r="3" fill={GREEN2} />
                        <circle cx="45" cy="15" r="6.5" fill={ORANGE2} /><circle cx="30" cy="22" r="5.5" fill={ORANGE2} /><circle cx="40" cy="27" r="3.5" fill={ORANGE1} /><circle cx="30" cy="34" r="4" fill={GREEN1} />
                    </Thumb>
                </div>
                <div className="mt-[17px] flex h-[20px] items-center pl-[2px] text-[12.5px] text-[#333]">
                    <span>For <b>scatter plots</b> try</span>
                </div>
                <div className="mt-[4px] flex h-[22px] items-center gap-[4px] pl-[2px] text-[12.5px] text-[#333]">
                    <span className="pt-[4px]">0 or more</span>
                    <span className="flex h-[20px] w-[90px] items-center justify-center rounded-full bg-[#4f96b5] text-[12.5px] text-white">Dimensions</span>
                </div>
                <div className="mt-[6px] flex h-[22px] items-center gap-[2px] pl-[2px] text-[12.5px] text-[#333]">
                    <span className="pt-[4px]">2 to 4</span>
                    <span className="flex h-[20px] w-[79px] items-center justify-center rounded-full bg-[#00b180] text-[12.5px] text-white">Measures</span>
                </div>
            </div>
        </div>
    );
}

function SheetTabs() {
    const sheets = [
        ['Sheet 1', 'w-[56px]'], ['Sheet 2', 'w-[57px]'], ['Sheet 3', 'w-[57px]'], ['Sheet 4', 'w-[57px]'], ['Sheet 5', 'w-[57px]'],
        ['Sheet 6', 'w-[57px]'], ['Sheet 7', 'w-[56px]'], ['Sheet 8', 'w-[57px]'], ['Sheet 9', 'w-[57px]'],
    ];
    const item = 'flex h-full items-center justify-center border-r border-[#c8c8c8] pt-[3px] text-[12.5px] text-[#666] shrink-0';
    const dashIcon = (
        <svg width="11" height="11" viewBox="0 0 11 11" fill="none" stroke="#666"><path d="M0.5 0.5H10.5V10.5H0.5ZM5.5 0.5V10.5M0.5 5.5H10.5" /></svg>
    );
    return (
        <div className="relative flex h-[28px] shrink-0 border-t border-[#d4d4d4] bg-[#e6e6e6]">
            <div className={`${item} w-[131px] justify-start gap-[6px] pl-[10px]`}>
                <svg width="8" height="12" viewBox="0 0 8 12" fill="none" stroke="#666"><ellipse cx="4" cy="2" rx="3.5" ry="1.5" /><path d="M0.5 2V10C0.5 12 7.5 12 7.5 10V2" /></svg>
                Data Source
            </div>
            {sheets.map(([name, w]) => (
                <div key={name} className={`${item} ${w} ${name === 'Sheet 6' ? 'bg-white font-bold text-[#444]' : ''}`}>{name}</div>
            ))}
            <div className={`${item} w-[102px] gap-[5px]`}>{dashIcon}Dashboard 1</div>
            <div className={`${item} w-[104px] gap-[5px]`}>{dashIcon}Dashboard 2</div>
            <div className={`${item} w-[104px] gap-[5px]`}>{dashIcon}Dashboard 3</div>
            <div className={`${item} w-[104px] gap-[5px]`}>{dashIcon}Dashboard 4</div>
            <div className={`${item} w-[71px] gap-[5px]`}>
                <svg width="11" height="12" viewBox="0 0 11 12" fill="none" stroke="#666"><path d="M0.5 1L3 0.5L5.5 2L8 0.5L10.5 1V10L8 9.5L5.5 11L3 9.5L0.5 10ZM3 1V9.5M8 1V9.5" /></svg>
                Story 1
            </div>
            <div className={`${item} w-[32px]`}>
                <svg width="16" height="16" viewBox="0 0 16 16" fill="none" stroke="#666"><path d="M9 11H1.5V1.5H11.5V8M4 8V6M6 8V3.5M8 8V5" /><Plus x={12} y={12} c="#444" /></svg>
            </div>
            <div className={`${item} w-[32px]`}>
                <svg width="16" height="16" viewBox="0 0 16 16" fill="none" stroke="#666"><path d="M9 11H1.5V1.5H11.5V8M6.5 1.5V11M1.5 6.5H11.5" /><Plus x={12} y={12} c="#444" /></svg>
            </div>
            <div className={`${item} w-[32px]`}>
                <svg width="16" height="16" viewBox="0 0 16 16" fill="none" stroke="#666"><path d="M9 11L6.5 12L4 10.5L1.5 11V1.5L4 1L6.5 2L9 1L11.5 1.5V8M4 1V10.5M9 1V8" /><Plus x={12} y={12} c="#444" /></svg>
            </div>
        </div>
    );
}

export default function App() {
    return (
        <div className="relative flex h-[705px] w-[1366px] flex-col overflow-hidden bg-white [font-family:Lato,sans-serif]">
            <div className="flex h-[22px] shrink-0 items-center pl-[3px] text-[12px] text-[#111]">
                <svg width="16" height="16" viewBox="0 0 16 16" stroke="#3f86b5" fill="none" strokeWidth="1.2">
                    <path d="M8 1V6M6 3H10M8 10V15M6 13H10M1 8H6M3 6V10M10 8H15M13 6V10" />
                    <path d="M3 3L5 5M11 3L13 5M3 13L5 11M11 13L13 11M7 8H9" stroke="#7fb0cf" strokeWidth="1" />
                </svg>
                <span className="ml-[4px]">Tableau - story 1 - Tableau license expires in 13 days</span>
                <div className="flex-1" />
                <div className="flex items-center">
                    <svg width="102" height="12" viewBox="0 0 102 12" fill="none" stroke="#111">
                        <path d="M0 6.5H10" />
                        <path d="M45.5 3.5H53.5V10.5H45.5ZM47.5 3.5V1.5H55.5V8.5H53.5" />
                        <path d="M91 1L101 11M101 1L91 11" strokeWidth="1.1" />
                    </svg>
                    <div className="w-[19px]" />
                </div>
            </div>
            <div className="flex h-[21px] shrink-0 items-center gap-[15.4px] pl-[8px] text-[12px] text-[#111]">
                {menus.map(m => (
                    <span key={m.join('')}>
                        {m.length === 2 ? (<><u>{m[0]}</u>{m[1]}</>) : (<>{m[0]}<u>{m[1]}</u>{m[2]}</>)}
                    </span>
                ))}
            </div>
            <Toolbar />
            <div className="flex min-h-0 flex-1 bg-[#f3f3f3]">
                <Sidebar />
                <MiddleColumn />
                <div className="ml-[7px] flex w-[823px] shrink-0 flex-col">
                    <div className="flex h-[27px] border border-[#d4d4d4] bg-[#fafafa]">
                        <div className="flex w-[124px] items-center gap-[8px] border-r border-[#d4d4d4] pl-[6px] text-[12.5px] text-[#555]">
                            <svg width="10" height="10" viewBox="0 0 10 10" stroke="#555" strokeWidth="1.6"><path d="M1 2V10M5 2V10M9 2V10" /><path d="M1 0V1M5 0V1M9 0V1" /></svg>
                            Columns
                        </div>
                    </div>
                    <div className="mt-[6px] flex h-[28px] border border-[#d4d4d4] bg-[#fafafa]">
                        <div className="flex w-[124px] items-center gap-[6px] border-r border-[#d4d4d4] pl-[6px] text-[12.5px] text-[#555]">
                            <svg width="12" height="10" viewBox="0 0 12 10" stroke="#555" strokeWidth="1.4"><path d="M3 1H12M3 5H12M3 9H12M0 1H1.6M0 5H1.6M0 9H1.6" /></svg>
                            Rows
                        </div>
                        <div className="ml-[2px] flex items-center gap-[2px]">
                            <div className="flex h-[20px] w-[148px] items-center rounded-l-full bg-[#00b180] pl-[11px] pt-[1px] text-[13px] font-medium text-white">SUM(Hospital)</div>
                            <div className="flex h-[20px] w-[148px] items-center rounded-r-full bg-[#00b180] pl-[11px] pt-[1px] text-[13px] font-medium text-white">SUM(School)</div>
                        </div>
                    </div>
                    <div className="mt-[6px] h-[519px] border border-[#d4d4d4] bg-white">
                        <div className="h-[32px] pl-[10px] pt-[13px] text-[20px] leading-[24px] text-[#333]">MATHES</div>
                        <Chart />
                    </div>
                </div>
            </div>
            <SheetTabs />
            <ShowMe />
        </div>
    );
}
